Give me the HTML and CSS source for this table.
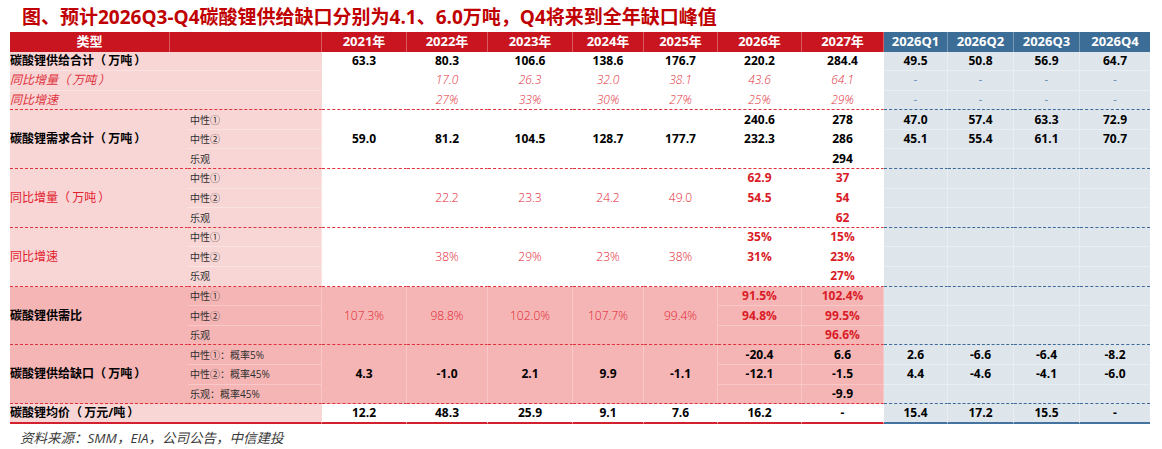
FILE: index.html
```html
<!DOCTYPE html>
<html lang="zh-CN">
<head>
<meta charset="utf-8">
<title>碳酸锂供需平衡</title>
<link rel="stylesheet" href="styles.css">
</head>
<body>
<div class="page">
  <h1 class="title">图、预计2026Q3-Q4碳酸锂供给缺口分别为4.1、6.0万吨，Q4将来到全年缺口峰值</h1>
  <table class="grid">
    <colgroup>
      <col class="ca"><col class="cb"><col class="cc">
      <col class="y21"><col class="y22"><col class="y23"><col class="y24"><col class="y25"><col class="y26"><col class="y27">
      <col class="q1"><col class="q2"><col class="q3"><col class="q4">
    </colgroup>
    <tr class="head">
      <th class="hr">类型</th>
      <th class="hr" colspan="2"></th>
      <th class="hr">2021年</th><th class="hr">2022年</th><th class="hr">2023年</th><th class="hr">2024年</th><th class="hr">2025年</th><th class="hr">2026年</th><th class="hr">2027年</th>
      <th class="hb">2026Q1</th><th class="hb">2026Q2</th><th class="hb">2026Q3</th><th class="hb last">2026Q4</th>
    </tr>

    <!-- supply -->
    <tr>
      <td class="lp lbl b" colspan="3">碳酸锂供给合计<span class="po">（</span>万吨<span class="pc">）</span></td>
      <td class="w b">63.3</td><td class="w b">80.3</td><td class="w b">106.6</td><td class="w b">138.6</td><td class="w b">176.7</td><td class="w b">220.2</td><td class="w b">284.4</td>
      <td class="q b">49.5</td><td class="q b">50.8</td><td class="q b">56.9</td><td class="q b last">64.7</td>
    </tr>
    <tr>
      <td class="lp lbl li ind" colspan="3">同比增量<span class="po">（</span>万吨<span class="pc">）</span></td>
      <td class="w"></td><td class="w ri">17.0</td><td class="w ri">26.3</td><td class="w ri">32.0</td><td class="w ri">38.1</td><td class="w ri">43.6</td><td class="w ri">64.1</td>
      <td class="q dash">-</td><td class="q dash">-</td><td class="q dash">-</td><td class="q dash last">-</td>
    </tr>
    <tr>
      <td class="lp lbl li ind end" colspan="3">同比增速</td>
      <td class="w end"></td><td class="w ri end">27%</td><td class="w ri end">33%</td><td class="w ri end">30%</td><td class="w ri end">27%</td><td class="w ri end">25%</td><td class="w ri end">29%</td>
      <td class="q dash end">-</td><td class="q dash end">-</td><td class="q dash end">-</td><td class="q dash end last">-</td>
    </tr>

    <!-- demand -->
    <tr>
      <td class="lp lbl b end" colspan="2" rowspan="3">碳酸锂需求合计<span class="po">（</span>万吨<span class="pc">）</span></td>
      <td class="lp sub">中性①</td>
      <td class="w b end" rowspan="3">59.0</td><td class="w b end" rowspan="3">81.2</td><td class="w b end" rowspan="3">104.5</td><td class="w b end" rowspan="3">128.7</td><td class="w b end" rowspan="3">177.7</td>
      <td class="w b">240.6</td><td class="w b">278</td>
      <td class="q b">47.0</td><td class="q b">57.4</td><td class="q b">63.3</td><td class="q b last">72.9</td>
    </tr>
    <tr>
      <td class="lp sub">中性②</td>
      <td class="w b">232.3</td><td class="w b">286</td>
      <td class="q b">45.1</td><td class="q b">55.4</td><td class="q b">61.1</td><td class="q b last">70.7</td>
    </tr>
    <tr>
      <td class="lp sub end">乐观</td>
      <td class="w end"></td><td class="w b end">294</td>
      <td class="q end"></td><td class="q end"></td><td class="q end"></td><td class="q end last"></td>
    </tr>

    <!-- yoy increase -->
    <tr>
      <td class="lp lbl lr ind2 end" colspan="2" rowspan="3">同比增量<span class="po">（</span>万吨<span class="pc">）</span></td>
      <td class="lp sub">中性①</td>
      <td class="w end" rowspan="3"></td><td class="w r end" rowspan="3">22.2</td><td class="w r end" rowspan="3">23.3</td><td class="w r end" rowspan="3">24.2</td><td class="w r end" rowspan="3">49.0</td>
      <td class="w rb">62.9</td><td class="w rb">37</td>
      <td class="q"></td><td class="q"></td><td class="q"></td><td class="q last"></td>
    </tr>
    <tr>
      <td class="lp sub">中性②</td>
      <td class="w rb">54.5</td><td class="w rb">54</td>
      <td class="q"></td><td class="q"></td><td class="q"></td><td class="q last"></td>
    </tr>
    <tr>
      <td class="lp sub end">乐观</td>
      <td class="w end"></td><td class="w rb end">62</td>
      <td class="q end"></td><td class="q end"></td><td class="q end"></td><td class="q end last"></td>
    </tr>

    <!-- yoy growth -->
    <tr>
      <td class="lp lbl lr ind2 end" colspan="2" rowspan="3">同比增速</td>
      <td class="lp sub">中性①</td>
      <td class="w end" rowspan="3"></td><td class="w r end" rowspan="3">38%</td><td class="w r end" rowspan="3">29%</td><td class="w r end" rowspan="3">23%</td><td class="w r end" rowspan="3">38%</td>
      <td class="w rb">35%</td><td class="w rb">15%</td>
      <td class="q"></td><td class="q"></td><td class="q"></td><td class="q last"></td>
    </tr>
    <tr>
      <td class="lp sub">中性②</td>
      <td class="w rb">31%</td><td class="w rb">23%</td>
      <td class="q"></td><td class="q"></td><td class="q"></td><td class="q last"></td>
    </tr>
    <tr>
      <td class="lp sub end">乐观</td>
      <td class="w end"></td><td class="w rb end">27%</td>
      <td class="q end"></td><td class="q end"></td><td class="q end"></td><td class="q end last"></td>
    </tr>

    <!-- supply/demand ratio -->
    <tr>
      <td class="dp lbl b end" colspan="2" rowspan="3">碳酸锂供需比</td>
      <td class="dp sub">中性①</td>
      <td class="dp r end" rowspan="3">107.3%</td><td class="dp r end" rowspan="3">98.8%</td><td class="dp r end" rowspan="3">102.0%</td><td class="dp r end" rowspan="3">107.7%</td><td class="dp r end" rowspan="3">99.4%</td>
      <td class="dp rb">91.5%</td><td class="dp rb">102.4%</td>
      <td class="q"></td><td class="q"></td><td class="q"></td><td class="q last"></td>
    </tr>
    <tr>
      <td class="dp sub">中性②</td>
      <td class="dp rb">94.8%</td><td class="dp rb">99.5%</td>
      <td class="q"></td><td class="q"></td><td class="q"></td><td class="q last"></td>
    </tr>
    <tr>
      <td class="dp sub end">乐观</td>
      <td class="dp end"></td><td class="dp rb end">96.6%</td>
      <td class="q end"></td><td class="q end"></td><td class="q end"></td><td class="q end last"></td>
    </tr>

    <!-- gap -->
    <tr>
      <td class="dp lbl b end" colspan="2" rowspan="3">碳酸锂供给缺口<span class="po">（</span>万吨<span class="pc">）</span></td>
      <td class="dp sub">中性①<span class="colon">：</span>概率5%</td>
      <td class="dp b end" rowspan="3">4.3</td><td class="dp b end" rowspan="3">-1.0</td><td class="dp b end" rowspan="3">2.1</td><td class="dp b end" rowspan="3">9.9</td><td class="dp b end" rowspan="3">-1.1</td>
      <td class="dp b">-20.4</td><td class="dp b">6.6</td>
      <td class="q b">2.6</td><td class="q b">-6.6</td><td class="q b">-6.4</td><td class="q b last">-8.2</td>
    </tr>
    <tr>
      <td class="dp sub">中性②<span class="colon">：</span>概率45%</td>
      <td class="dp b">-12.1</td><td class="dp b">-1.5</td>
      <td class="q b">4.4</td><td class="q b">-4.6</td><td class="q b">-4.1</td><td class="q b last">-6.0</td>
    </tr>
    <tr>
      <td class="dp sub end">乐观<span class="colon">：</span>概率45%</td>
      <td class="dp end"></td><td class="dp b end">-9.9</td>
      <td class="q end"></td><td class="q end"></td><td class="q end"></td><td class="q end last"></td>
    </tr>

    <!-- price -->
    <tr class="bottom">
      <td class="lp lbl b" colspan="3">碳酸锂均价<span class="po">（</span>万元/吨<span class="pc">）</span></td>
      <td class="w b">12.2</td><td class="w b">48.3</td><td class="w b">25.9</td><td class="w b">9.1</td><td class="w b">7.6</td><td class="w b">16.2</td><td class="w b">-</td>
      <td class="q b">15.4</td><td class="q b">17.2</td><td class="q b">15.5</td><td class="q b last">-</td>
    </tr>
  </table>
  <p class="source">资料来源<span class="colon">：</span>SMM<span class="comma">，</span>EIA<span class="comma">，</span>公司公告<span class="comma">，</span>中信建投</p>
</div>
</body>
</html>
```

FILE: styles.css
```css
html, body {
  margin: 0;
  padding: 0;
  background: #ffffff;
}

body {
  font-family: "Open Sans", "Noto Sans CJK SC", sans-serif;
  color: #000;
}

.page {
  padding: 0 12px 0 10px;
}

.title {
  margin: 0;
  height: 27.5px;
  padding-top: 4px;
  line-height: 27px;
  padding-left: 12px;
  font-size: 19px;
  font-weight: 700;
  color: #c00000;
  white-space: nowrap;
  font-family: "Open Sans", "Noto Sans CJK SC", sans-serif;
}

/* ---------- table ---------- */
.grid {
  border-collapse: separate;
  border-spacing: 0;
  table-layout: fixed;
  width: 1140px;
}

.ca { width: 160px; }
.cb { width: 18px; }
.cc { width: 134px; }
.y21 { width: 85px; }
.y22 { width: 81px; }
.y23 { width: 85px; }
.y24 { width: 71px; }
.y25 { width: 74px; }
.y26 { width: 84px; }
.y27 { width: 82px; }
.q1 { width: 64px; }
.q2 { width: 66px; }
.q3 { width: 66px; }
.q4 { width: 70px; }

.grid tr { height: 19.6px; }
.grid tr.head { height: 20px; }

.grid th,
.grid td {
  padding: 0;
  line-height: 1;
  font-size: 12px;
  text-align: center;
  vertical-align: middle;
  white-space: nowrap;
  overflow: hidden;
}

/* header */
.grid th {
  color: #ffffff;
  font-size: 13px;
  font-weight: 700;
  border-right: 1px solid rgba(255, 255, 255, 0.3);
}
.hr { background: #c8151f; }
.hb { background: #3b6d96; }
.grid th.last { border-right: none; }

/* cell backgrounds + faint grid lines */
.w  { background: #ffffff; border-right: 1px solid #ffffff; border-bottom: 1px solid #ffffff; }
.lp { background: #f8d6d6; border-right: 1px solid #fae3e3; border-bottom: 1px solid #fae3e3; }
.dp { background: #f5b5b5; border-right: 1px solid #f8c8c8; border-bottom: 1px solid #f8c8c8; }
.q  { background: #dee6ec; border-right: 1px solid #e9eef2; border-bottom: 1px solid #e9eef2; }
.q.last { border-right: none; }

/* section separators */
.grid td.end { border-bottom: 1px dashed #e0323c; }
.grid td.q.end { border-bottom: 1px dashed #3d6a9a; }

/* bottom rule */
.grid tr.bottom td { border-bottom: 2px solid #d2202e; }
.grid tr.bottom td.q { border-bottom: 2px solid #44739f; }

/* labels */
.grid td.lbl {
  text-align: left;
}
.grid td.lbl.lp { border-right-color: #f8d6d6; }
.grid td.lbl.dp { border-right-color: #f5b5b5; }
.ind { padding-left: 11px; }
.ind2 { padding-left: 10px; }

/* a little air inside the full-width brackets, as in the original font */
.po { margin-right: 0.18em; }
.pc { margin-left: 0.18em; }

.grid td.sub {
  text-align: left;
  padding-left: 2px;
  font-size: 10px;
  color: #2e2e2e;
}

/* text styles */
.b  { font-weight: 700; color: #000; }
.r  { font-weight: 300; color: #e2212d; }
.rb { font-weight: 700; color: #d91c28; }
.ri { font-weight: 300; font-style: italic; color: #e0303a; }
.li { font-weight: 400; font-style: italic; color: #e0303a; }
.lr { font-weight: 400; color: #e2212d; }
.dash { color: #6b94bf; font-weight: 400; }

/* source */
.source {
  margin: 4px 0 0 10px;
  font-size: 13.5px;
  line-height: 20px;
  font-style: italic;
  color: #3a3a3a;
}
```
